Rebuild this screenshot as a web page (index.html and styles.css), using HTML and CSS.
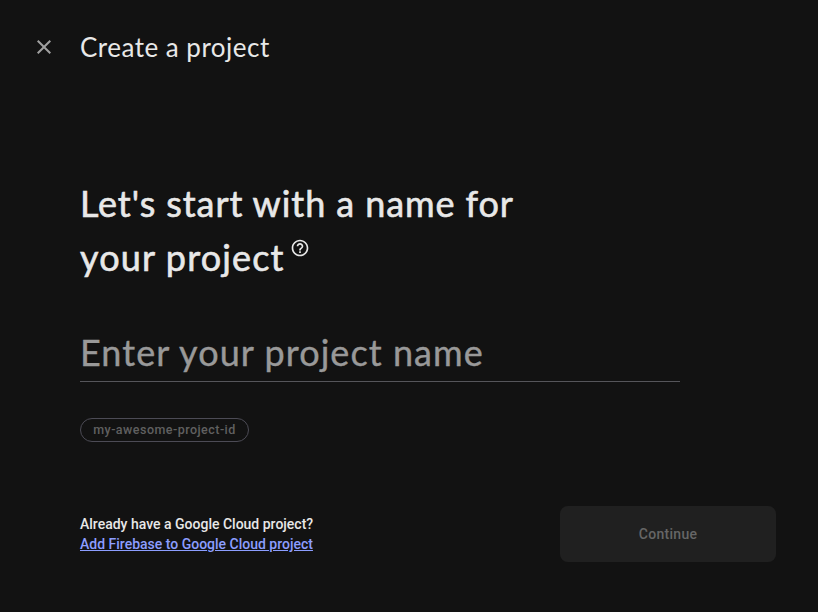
FILE: index.html
```html
<!DOCTYPE html>
<html lang="en">
<head>
<meta charset="utf-8">
<title>Create a project</title>
<link rel="stylesheet" href="styles.css">
</head>
<body>
<header class="topbar">
  <button class="close" aria-label="Close"><svg width="24" height="24" viewBox="0 0 24 24"><path d="M19 6.41 17.59 5 12 10.59 6.41 5 5 6.41 10.59 12 5 17.59 6.41 19 12 13.41 17.59 19 19 17.59 13.41 12z"/></svg></button>
  <span class="title">Create a project</span>
</header>
<main class="content">
  <h1 class="heading"><span class="line line-one">Let's start with a name for</span><span class="line"><span class="line-two">your project</span><svg class="help" width="20" height="20" viewBox="0 0 24 24"><path d="M11 18h2v-2h-2v2zm1-16C6.48 2 2 6.48 2 12s4.480 10 10 10 10-4.480 10-10S17.520 2 12 2zm0 18c-4.410 0-8-3.590-8-8s3.590-8 8-8 8 3.590 8 8-3.590 8-8 8zm0-14c-2.210 0-4 1.790-4 4h2c0-1.100.9-2 2-2s2 .9 2 2c0 2-3 1.750-3 5h2c0-2.250 3-2.500 3-5 0-2.210-1.790-4-4-4z"/></svg></span></h1>
  <div class="field"><span class="placeholder">Enter your project name</span></div>
  <div class="chip"><span class="chip-text">my-awesome-project-id</span></div>
  <footer class="footer">
    <div class="existing">
      <div><span class="question">Already have a Google Cloud project?</span></div>
      <a class="link" href="#">Add Firebase to Google Cloud project</a>
    </div>
    <button class="continue" disabled>Continue</button>
  </footer>
</main>
</body>
</html>
```
FILE: styles.css
```css
* { box-sizing: border-box; }
body { margin: 0; height: 612px; overflow: hidden; background: #121212; color: #e8e8e8; font-family: Roboto, sans-serif; }
button { border: 0; padding: 0; font-family: inherit; }
.topbar { display: flex; align-items: center; height: 94px; padding-left: 32px; }
.close { width: 24px; height: 24px; margin-right: 24px; background: none; fill: #a0a0a0; }
.close svg { display: block; }
.title { font: 400 26px/32px Lato, sans-serif; letter-spacing: .49px; }
.content { padding: 82px 42px 0 80px; }
.heading { margin: 0; font: 400 36px/54px Lato, sans-serif; letter-spacing: .91px; -webkit-text-stroke: .6px currentColor; }
.line { display: flex; white-space: nowrap; }
.line-two { letter-spacing: 1.15px; }
.help { margin: 8px 0 0 5px; fill: #e8e8e8; }
.help path { stroke: none; }
.field { width: 600px; height: 59px; margin-top: 39px; padding-top: 2px; border-bottom: 1px solid #55555a; color: #999; font: 400 36px/54px Lato, sans-serif; letter-spacing: 1.07px; white-space: nowrap; -webkit-text-stroke: .4px currentColor; }
.chip { display: flex; align-items: center; justify-content: center; width: 169px; height: 24px; margin-top: 36px; padding-bottom: 1px; border: 1px solid #4c4b55; border-radius: 12px; color: #606060; font-size: 12.5px; font-weight: 500; letter-spacing: .47px; }
.footer { display: flex; justify-content: space-between; margin-top: 64px; }
.existing { padding-top: 8px; font-size: 14px; font-weight: 500; line-height: 20px; }
.link { color: #8c9eff; }
.continue { width: 216px; height: 56px; border-radius: 8px; background: #202020; color: #666; font-size: 14px; font-weight: 500; letter-spacing: .3px; }
```
